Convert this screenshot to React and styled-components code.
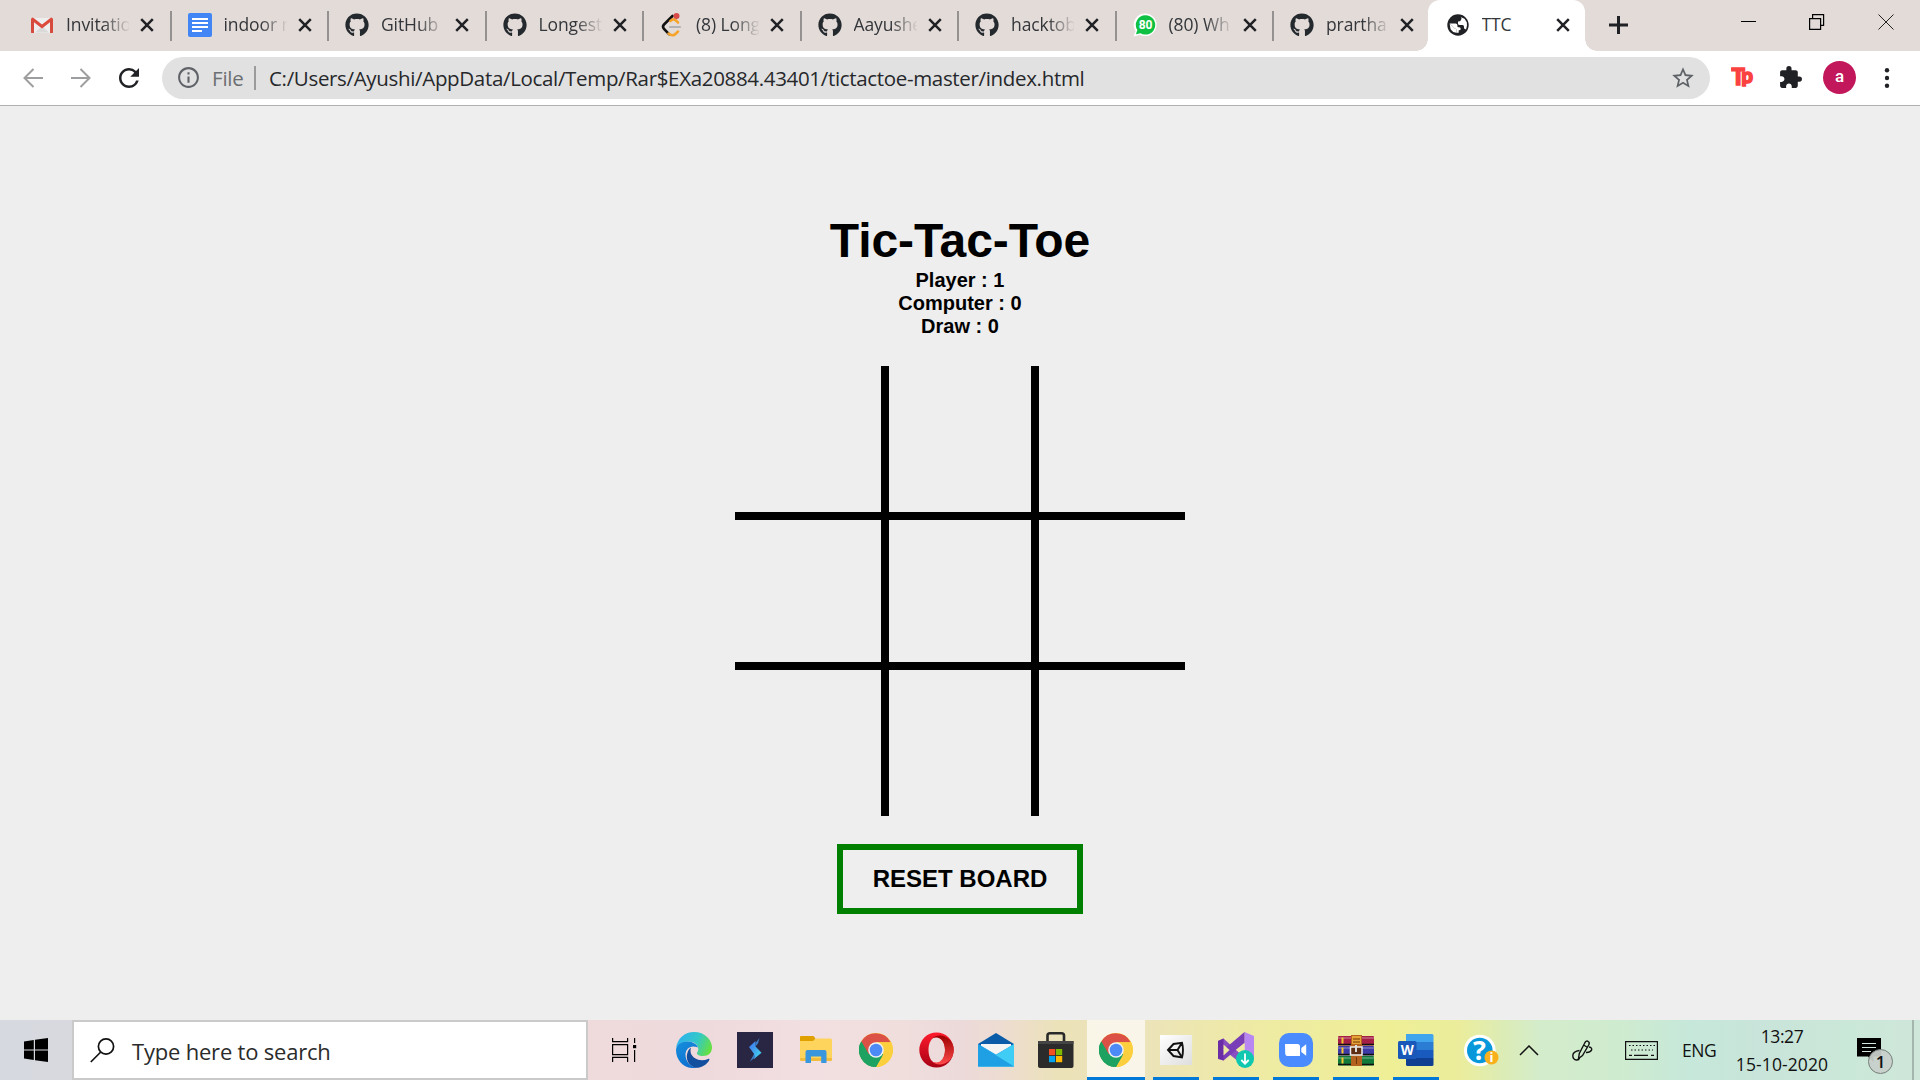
import React from "react";
import styled, { createGlobalStyle, css } from "styled-components";
import { FaGithub } from "react-icons/fa";
import { MdExtension, MdInfoOutline, MdRefresh, MdStarBorder } from "react-icons/md";

const GlobalStyle = createGlobalStyle`
  * { box-sizing: border-box; }
  html, body { margin: 0; padding: 0; }
  body { width: 1920px; height: 1080px; overflow: hidden; }
  svg { display: block; flex: none; }
`;

const UI = `"Open Sans", "Noto Sans", sans-serif`;
const PAGE = `"Liberation Sans", Arial, sans-serif`;

const Screen = styled.div`
  display: flex;
  flex-direction: column;
  width: 1920px;
  height: 1080px;
  background: #eee;
  font-family: ${UI};
`;

/* ---------- tab strip ---------- */

const TabStrip = styled.div`
  display: flex;
  height: 51px;
  flex: none;
  padding-left: 13px;
  background: #e3dbd8;
`;

const Tab = styled.div`
  display: flex;
  align-items: center;
  position: relative;
  width: 157.5px;
  height: 51px;
  flex: none;
  padding: 0 0 1px 17px;
  ${(p) =>
    p.$line &&
    css`
      &::after {
        content: "";
        position: absolute;
        right: -1px;
        top: 11px;
        width: 2px;
        height: 30px;
        background: #959190;
      }
    `}
  ${(p) =>
    p.$active &&
    css`
      margin-left: -3px;
      padding-left: 18px;
      background: #fff;
      border-radius: 12px 12px 0 0;
      &::before,
      &::after {
        content: "";
        position: absolute;
        bottom: 0;
        width: 12px;
        height: 12px;
      }
      &::before {
        left: -12px;
        background: radial-gradient(circle at 0 0, transparent 11.5px, #fff 12px);
      }
      &::after {
        right: -12px;
        background: radial-gradient(circle at 100% 0, transparent 11.5px, #fff 12px);
      }
    `}
`;

const TabIcon = styled.span`
  display: flex;
  width: 24px;
  height: 24px;
  flex: none;
  align-items: center;
  justify-content: center;
  color: #24292e;
`;

const TabTitle = styled.span`
  width: 63px;
  margin: 0 0 2px 12px;
  overflow: hidden;
  white-space: nowrap;
  font-size: 17.5px;
  line-height: 26px;
  letter-spacing: -0.1px;
  color: #33363a;
  ${(p) =>
    p.$fade &&
    css`
      mask-image: linear-gradient(to right, #000 58%, transparent 102%);
    `}
`;

const CloseSlot = styled.span`
  display: flex;
  width: 14px;
  margin-left: 11px;
  justify-content: center;
`;

const NewTab = styled.span`
  display: flex;
  align-items: center;
  margin-left: 24px;
  padding-bottom: 1px;
`;

const WindowControls = styled.div`
  display: flex;
  height: 43px;
  margin-left: auto;
  align-items: center;
`;

const WindowButton = styled.span`
  display: flex;
  width: 68.5px;
  justify-content: center;
`;

/* ---------- toolbar ---------- */

const Toolbar = styled.div`
  display: flex;
  align-items: center;
  height: 55px;
  flex: none;
  padding: 0 0 1px 9px;
  background: #fff;
  border-bottom: 1px solid #b0b0b0;
`;

const NavButton = styled.span`
  display: flex;
  width: 48px;
  justify-content: center;
  color: ${(p) => (p.$off ? "#9d9ea0" : "#202124")};
`;

const Omnibox = styled.div`
  display: flex;
  align-items: center;
  width: 1548px;
  height: 42px;
  margin-left: 9px;
  padding: 0 14px 0 14px;
  border-radius: 21px;
  background: #e1e1e1;
  color: #5f6368;
  font-size: 20.5px;
  line-height: 30px;
  white-space: nowrap;
`;

const Scheme = styled.span`
  width: 42px;
  margin-left: 11px;
  color: #6c6f72;
  letter-spacing: -0.2px;
`;

const Divider = styled.span`
  width: 2px;
  height: 24px;
  background: #9b9b9b;
`;

const Url = styled.span`
  flex: 1;
  margin-left: 13px;
  color: #26282b;
  letter-spacing: -0.33px;
`;

const Extensions = styled.div`
  display: flex;
  flex: 1;
  align-items: center;
  padding-left: 21px;
`;

const ExtensionIcon = styled.span`
  display: flex;
  margin-left: 23px;
`;

const Avatar = styled.span`
  width: 33px;
  height: 33px;
  margin-left: 20px;
  border-radius: 50%;
  background: #c2185b;
  color: #fff;
  font: 500 17px/31px Roboto, sans-serif;
  text-align: center;
`;

const MenuDots = styled.span`
  display: flex;
  margin-left: 28px;
`;

/* ---------- game ---------- */

const Game = styled.main`
  display: flex;
  flex: 1;
  flex-direction: column;
  align-items: center;
  padding-top: 107px;
  font-family: ${PAGE};
  font-weight: 700;
  color: #000;
`;

const Title = styled.h1`
  margin: 0 0 1px;
  font-size: 48px;
  line-height: 55px;
  letter-spacing: -0.1px;
`;

const Score = styled.div`
  font-size: 20px;
  line-height: 23px;
`;

const Board = styled.div`
  display: grid;
  grid-template-columns: repeat(3, 150px);
  grid-template-rows: repeat(3, 150px);
  margin: 28px 0;
`;

const Cell = styled.div`
  border: 0 solid #000;
  border-left-width: ${(p) => (p.$col > 0 ? 4 : 0)}px;
  border-right-width: ${(p) => (p.$col < 2 ? 4 : 0)}px;
  border-top-width: ${(p) => (p.$row > 0 ? 4 : 0)}px;
  border-bottom-width: ${(p) => (p.$row < 2 ? 4 : 0)}px;
`;

const ResetButton = styled.button`
  width: 246px;
  height: 70px;
  padding: 0;
  border: 6px solid green;
  background: transparent;
  font: 700 24px/28px ${PAGE};
  color: #000;
`;

/* ---------- taskbar ---------- */

const Taskbar = styled.div`
  display: flex;
  height: 60px;
  flex: none;
  background: linear-gradient(
    to right,
    #d6d9e0 0,
    #d8d9df 72px,
    #efdadc 588px,
    #eed9dc 700px,
    #f2dfe1 810px,
    #f0dedd 900px,
    #ecd9da 960px,
    #eddcd2 1000px,
    #ebe2b8 1060px,
    #ece3bb 1140px,
    #eeeaa6 1240px,
    #efef96 1390px,
    #ebed9c 1460px,
    #ddecb4 1500px,
    #d3eccb 1540px,
    #cfebcf 1620px,
    #c6e8da 1690px,
    #c9e4da 1760px,
    #cae8d8 1850px,
    #cfe6da 1920px
  );
`;

const StartButton = styled.span`
  display: flex;
  width: 72px;
  align-items: center;
  justify-content: center;
`;

const SearchBox = styled.div`
  display: flex;
  width: 516px;
  align-items: center;
  padding-left: 16px;
  border: 2px solid #cacaca;
  background: #fff;
  color: #2b2b2b;
  font-size: 22px;
  line-height: 32px;
`;

const SearchText = styled.span`
  margin: 1px 0 0 17px;
  letter-spacing: -0.2px;
`;

const TaskView = styled.span`
  display: flex;
  width: 78px;
  align-items: center;
  padding-left: 24px;
`;

const TaskButton = styled.span`
  display: flex;
  position: relative;
  width: 58px;
  margin: 0 1px;
  padding-right: ${(p) => p.$shift || 0}px;
  align-items: center;
  justify-content: center;
  background: ${(p) => (p.$state === "active" ? "rgba(255,255,255,.68)" : "none")};
  ${(p) =>
    p.$state &&
    css`
      &::after {
        content: "";
        position: absolute;
        bottom: 0;
        left: ${p.$state === "active" ? 0 : 6}px;
        right: ${p.$state === "active" ? 0 : 6}px;
        height: 3px;
        background: #0078d7;
      }
    `}
`;

const Tray = styled.div`
  display: flex;
  flex: 1;
  align-items: center;
  padding-left: 18px;
  color: #111;
  font-size: 17.5px;
  line-height: 26px;
`;

const TrayItem = styled.span`
  display: flex;
  margin-left: ${(p) => p.$gap || 0}px;
  padding-top: ${(p) => p.$drop || 0}px;
`;

const Language = styled.span`
  width: 35px;
  margin-left: 24px;
  letter-spacing: -0.4px;
  white-space: nowrap;
`;

const Clock = styled.div`
  display: flex;
  width: 100px;
  height: 60px;
  margin-left: 15px;
  flex-direction: column;
  align-items: center;
  justify-content: center;
  gap: 2px;
  white-space: nowrap;
`;

const ClockLine = styled.span`
  letter-spacing: ${(p) => p.$spacing}px;
`;

const DesktopEdge = styled.span`
  width: 8px;
  height: 60px;
  margin-left: auto;
  border-left: 2px solid #a3b5ad;
`;

/* ---------- drawings ---------- */

const CloseX = () => (
  <svg width="14" height="14" viewBox="0 0 14 14" stroke="#202124" strokeWidth="2.5">
    <path d="M1.2 1.2 12.8 12.8M12.8 1.2 1.2 12.8" />
  </svg>
);

const Gmail = () => (
  <svg width="24" height="24" viewBox="0 0 24 24">
    <path d="M2 5h20v15H2z" fill="#eee" />
    <path d="M5 19.5 12 13l7 6.5z" fill="#dadada" />
    <path d="M1 6.5Q1 4.500 3 4.500V20H1.800Q1 20 1 19z" fill="#d54b3d" />
    <path d="M23 6.500Q23 4.500 21 4.500V20h1.200q.8 0 .8-1z" fill="#d54b3d" />
    <path d="M2.400 6 12 13.500 21.600 6" fill="none" stroke="#dc4a3e" strokeWidth="3" />
    <path d="M4 8v12H1.500V6zM20 8v12h2.500V6z" fill="#d54b3d" />
  </svg>
);

const Docs = () => (
  <svg width="24" height="24" viewBox="0 0 24 24">
    <rect width="24" height="24" rx="2" fill="#4285f4" />
    <path d="M4 6h16M4 10h16M4 14h16M4 18h10" stroke="#fff" strokeWidth="2.200" />
  </svg>
);

const LeetCode = () => (
  <svg width="24" height="24" viewBox="0 0 24 24" fill="none" strokeLinecap="round">
    <path d="M12.500 3 4 11.500q-2 2 0 4.500l5 5.200" stroke="#111" strokeWidth="2.600" />
    <path d="M10.500 8q3-3 5.500-.5l2 2M8.500 20.500q4 3.500 7.500 0l2-2" stroke="#f7a42b" strokeWidth="2.500" />
    <path d="M10 14h10" stroke="#b3b3b3" strokeWidth="2.200" />
    <circle cx="16.500" cy="3" r="3" fill="#d84b48" />
  </svg>
);

const WhatsApp = () => (
  <svg width="24" height="24" viewBox="0 0 24 24">
    <path d="M12.500.5a11.300 11.300 0 1 1-5.500 21.300L.5 23.500 2.600 18A11.300 11.300 0 0 1 12.500.5z" fill="#fff" />
    <path d="M12.500 2.200a9.700 9.700 0 1 1-5 18l-4.600 1.100 1.500-4.200a9.700 9.700 0 0 1 8.100-14.900z" fill="#0fc143" />
    <text x="12.600" y="16.300" textAnchor="middle" fontFamily="Roboto" fontWeight="700" fontSize="12" fill="#fff">80</text>
  </svg>
);

const Globe = () => (
  <svg width="22" height="22" viewBox="0 0 22 22">
    <circle cx="11" cy="11" r="10.700" fill="#202124" />
    <path d="M12.500 2.500Q15.500 3.500 14 6q-.5 1.500-3 1.500v2.200q0 1.300 1.800 1.300h2.700q1.500 0 1.500 1.800v1.700q1.700.2 2 1.200l1-4.200-.2-3.200-2.300-3.500zM2.600 9.500l5 4.800q.7.700 1.700.7v3.800q-4-.6-5.700-3.600z" fill="#fff" />
    <path d="M2.600 9.500h6q1.800 0 1.800 1.800v.9q0 1 1 1h.8q1.500 0 1.500 1.500t-1.500 1.500h-.5v2.600H9.300V15q-1 0-1.700-.7z" fill="#fff" />
  </svg>
);

const Arrow = ({ flip }) => (
  <svg width="20" height="20" viewBox="0 0 20 20" fill="none" stroke="currentColor" strokeWidth="2">
    <path d={flip ? "M0 10h18M9.500 1l9 9-9 9" : "M20 10H2M10.500 1 1.500 10l9 9"} />
  </svg>
);

const TypingLogo = () => (
  <svg width="24" height="26" viewBox="0 0 24 26" fill="#fa4341" stroke="#fa4341" strokeWidth="1.600" fontFamily="Lato" fontWeight="900">
    <text x=".6" y="19.500" fontSize="22">T</text>
    <text x="10.400" y="18" fontSize="20">p</text>
  </svg>
);

const WindowsLogo = () => (
  <svg width="24" height="24" viewBox="0 0 24 24">
    <path d="M0 3.400 9.800 2v9.400H0zM11 1.800 24 0v11.400H11zM0 12.500h9.800V22L0 20.600zM11 12.500h13V24l-13-1.800z" />
  </svg>
);

const SearchGlyph = () => (
  <svg width="25" height="25" viewBox="0 0 25 25" fill="none" stroke="#111" strokeWidth="1.700">
    <circle cx="16" cy="8.500" r="7.600" />
    <path d="M10.800 14 .8 24" />
  </svg>
);

const TaskViewGlyph = () => (
  <svg width="25" height="24" viewBox="0 0 25 24" fill="none" stroke="#000" strokeWidth="1.200">
    <path d="M.6 0v3.600h15V0M.6 24v-4.600h15V24M.6 6.600h15v10H.6zM22.600 0v5M22.600 12v12" />
    <path d="M21 7h3.200v3.200H21z" fill="#000" stroke="none" />
  </svg>
);

const Edge = () => (
  <svg width="36" height="36" viewBox="0 0 36 36">
    <defs>
      <linearGradient id="edgeTop" x1="0" y1="0.300" x2="1" y2="0.600">
        <stop offset="0" stopColor="#2fb0ef" />
        <stop offset=".55" stopColor="#33c8c9" />
        <stop offset="1" stopColor="#66e03f" />
      </linearGradient>
      <linearGradient id="edgeLeft" x1="0" y1="0" x2="0.600" y2="1">
        <stop offset="0" stopColor="#1590dc" />
        <stop offset="1" stopColor="#0f6fd0" />
      </linearGradient>
    </defs>
    <path d="M0 17C1 6 9 0 18 0c11 0 18 8 18 15.500 0 5-3.500 8.500-9 8.500-4 0-6.500-1.500-6-3 .3-1 1.300-1.700 1.300-4 0-4-4-7.500-10-7.500C6 9.500 1 12.500 0 17z" fill="url(#edgeTop)" />
    <path d="M0 18C.5 12 6 9.300 12 9.500c5 .2 9 3 10 6-8-3.500-12.500 2-12.500 7C9.500 30 15 35 21 35.700 9 38 0 29 0 18z" fill="url(#edgeLeft)" />
    <path d="M15 15.500C9 20 8.500 33 20 35.800c6 0 11-3.300 13.300-7.800.5-1-.4-1.400-1.200-1C23 31 14.500 25 14.500 19q0-2 .5-3.500z" fill="#124f9e" />
  </svg>
);

const SIcon = () => (
  <svg width="36" height="36" viewBox="0 0 36 36">
    <defs>
      <linearGradient id="sGrad" x1="0" y1="0" x2="1" y2="1">
        <stop offset="0" stopColor="#3e6df0" />
        <stop offset="1" stopColor="#43e0ee" />
      </linearGradient>
    </defs>
    <path d="M0 0h36v36H0z" fill="#292643" />
    <path d="m12 15 6.500-6v5.500l6 6.200L17 27v-5.300z" fill="url(#sGrad)" />
    <path d="m18.500 11 4-5-1.500 5.500-2.500 3zM17 22l-4 7.500 5.500-4.500z" fill="#3b7fc9" />
  </svg>
);

const Explorer = () => (
  <svg width="32" height="28" viewBox="0 0 32 28">
    <path d="M1 0h12.500l2 2.500L13 6H0V1q0-1 1-1z" fill="#dfa000" />
    <path d="M0 5h13l3-2.500h14.500Q32 2.500 32 4v19.500q0 1.500-1.500 1.500h-29Q0 25 0 23.500z" fill="#ffd45c" />
    <path d="M0 22h32v1.500q0 1.500-1.500 1.500h-29Q0 25 0 23.500z" fill="#f2bd3c" />
    <path d="M5.500 27V16q0-2 2-2h17q2 0 2 2v11h-5.300v-6.500H11V27z" fill="#3a96dd" />
  </svg>
);

const Chrome = () => (
  <svg width="34" height="34" viewBox="0 0 48 48">
    <circle cx="24" cy="24" r="24" fill="#fccf3f" />
    <path d="M24 24 3.200 12A24 24 0 0 0 24 48l10.400-18z" fill="#1da261" />
    <path d="M24 24 13.600 30 3.200 12a24 24 0 0 1 41.600 0.900H24z" fill="#db5145" />
    <path d="M24 13h21.300A24 24 0 0 1 24 48l10-17.500z" fill="#fccf3f" />
    <path d="M3.200 12 13.600 30A12 12 0 0 0 34.400 30L24 48A24 24 0 0 1 3.200 12z" fill="#1da261" />
    <circle cx="24" cy="24" r="11" fill="#f1f1f1" />
    <circle cx="24" cy="24" r="8.900" fill="#4c8bf5" />
  </svg>
);

const Opera = () => (
  <svg width="35" height="36" viewBox="0 0 35 36">
    <defs>
      <linearGradient id="operaLeft" x1="0" y1="0" x2="0" y2="1">
        <stop offset="0" stopColor="#ff1b2d" />
        <stop offset="1" stopColor="#a70014" />
      </linearGradient>
      <linearGradient id="operaRight" x1="0" y1="0" x2="0" y2="1">
        <stop offset="0" stopColor="#9c0000" />
        <stop offset="1" stopColor="#ff4b4b" />
      </linearGradient>
    </defs>
    <path fillRule="evenodd" d="M17.500.5a17.200 17.500 0 1 1 0 35 17.200 17.500 0 1 1 0-35zm0 4.500c-5 0-8 6-8 13s3 13 8 13 8.500-6 8.500-13-3.500-13-8.500-13z" fill="url(#operaLeft)" />
    <path d="M13 6.500C20-.5 35 5 34.700 18 34.700 31 20 36.500 13 29.500c7 3.500 13-2 13-11.500S20 3 13 6.500z" fill="url(#operaRight)" />
  </svg>
);

const Mail = () => (
  <svg width="36" height="34" viewBox="0 0 36 34">
    <path d="M0 11 18 0l18 11v6H0z" fill="#0a5ba8" />
    <path d="M3 11h30v9L18 26 3 20z" fill="#f4f4f4" />
    <path d="M0 11v22.500h36V11L18 21.500z" fill="#2cb3ee" />
    <path d="M0 33.500 36 11v22.500z" fill="#40cdf5" />
    <path d="M0 33.500V11l36 22.500z" fill="#1f9fe4" />
  </svg>
);

const Store = () => (
  <svg width="36" height="36" viewBox="0 0 36 36">
    <path d="M9.500 12V3.500Q9.500 1.300 12 1.300h11.500q2.500 0 2.500 2.200V12" fill="none" stroke="#292929" strokeWidth="2.600" />
    <path d="M0 9h35.500v25q0 2-2 2H2q-2 0-2-2z" fill="#2b2b2b" />
    <path d="M0 9h35.500v3H0z" fill="#444" />
    <path d="M11 17h6.200v6.200H11z" fill="#f25022" />
    <path d="M18 17h6.200v6.200H18z" fill="#7fba00" />
    <path d="M11 24h6.200v6.200H11z" fill="#00a4ef" />
    <path d="M18 24h6.200v6.200H18z" fill="#ffb900" />
  </svg>
);

const Unity = () => (
  <svg width="32" height="30" viewBox="0 0 32 30">
    <defs>
      <linearGradient id="unityBg" x1="0" y1="0" x2="1" y2="1">
        <stop offset="0" stopColor="#fff" />
        <stop offset="1" stopColor="#dedede" />
      </linearGradient>
    </defs>
    <path d="M0 0h32v30H0z" fill="url(#unityBg)" />
    <path d="M8 15 13.500 9l8.500-1.300q2 7.300 0 14.800L13.500 21zM8 15h9.500M17.500 15 22 7.700M17.500 15l4.500 7.500" fill="none" stroke="#111" strokeWidth="1.900" />
  </svg>
);

const VisualStudio = () => (
  <svg width="36" height="36" viewBox="0 0 36 36">
    <path d="M26.500 0 36 4v23l-9.500 5z" fill="#b987f2" />
    <path fillRule="evenodd" d="M0 9 5.500 6.500 27 26v6L21 30 0 13z" fill="#8a4fc0" />
    <path d="M0 22.500 26.500 0v11L5.500 28.500 0 27z" fill="#7a3db8" />
    <path d="M0 9 5.500 6.500V28.500L0 26z" fill="#6a2da5" />
    <path d="M5.500 12.500v11l6-5.500z" fill="#eeea9f" />
    <path d="m26.500 11-8.500 6.800 8.500 6.700z" fill="#eeea9f" />
    <circle cx="27" cy="27" r="9" fill="#10c8b0" />
    <path d="M27 21.500v10M23.300 28l3.700 3.700 3.700-3.700" fill="none" stroke="#fff" strokeWidth="1.800" />
  </svg>
);

const Zoom = () => (
  <svg width="34" height="34" viewBox="0 0 34 34">
    <rect width="34" height="34" rx="10" fill="#4a8cff" />
    <path d="M6 11h12.500q2.500 0 2.500 2.500V23H9q-2.800 0-2.800-2.800zM22.300 15l4.900-3.700v11.400L22.300 19z" fill="#fff" />
  </svg>
);

const WinRar = () => (
  <svg width="36" height="31" viewBox="0 0 36 31">
    <rect y="1" width="36" height="9.600" rx="1" fill="#a51e45" />
    <rect y="11" width="36" height="9.600" rx="1" fill="#3d3aa6" />
    <rect y="21" width="36" height="9.600" rx="1" fill="#11793a" />
    <path d="M0 3h36M0 13h36M0 23h36" stroke="#fff" strokeOpacity=".3" strokeWidth="1.500" />
    <path d="M0 9.500h36M0 19.500h36M0 29.500h36" stroke="#111" strokeWidth="1.500" />
    <path d="M4.500 2.500v6M4.500 12.500v6M4.500 22.500v6" stroke="#f4c431" strokeWidth="2" />
    <path d="M13 0h11v31H13z" fill="#b3631f" />
    <path d="M14 1h9v8h-9z" fill="#e8a336" />
    <path d="M15 4h7M15 7h7M18.500 22v7" stroke="#6e3609" />
    <rect x="12.500" y="12" width="11.500" height="8" fill="#5e2d12" stroke="#eee" strokeWidth="1.500" />
    <path d="M18 10v7" stroke="#ddd" strokeWidth="2" />
  </svg>
);

const Word = () => (
  <svg width="36" height="32" viewBox="0 0 36 32">
    <path d="M8 0h26q1.500 0 1.500 1.500V8H8z" fill="#41a5ee" />
    <path d="M8 8h27.500v8H8z" fill="#2b7cd3" />
    <path d="M8 16h27.500v8H8z" fill="#185abd" />
    <path d="M8 24h27.500v6.500Q35.500 32 34 32H9.500Q8 32 8 30.500z" fill="#103f91" />
    <rect y="7" width="18.500" height="18" rx="1.500" fill="#1957b8" />
    <text x="9.200" y="21" textAnchor="middle" fontFamily="Open Sans" fontWeight="700" fontSize="13.500" fill="#fff">W</text>
  </svg>
);

const Help = () => (
  <svg width="36" height="34" viewBox="0 0 36 34">
    <circle cx="15.800" cy="17.500" r="15.800" fill="#fff" />
    <circle cx="15.800" cy="17.500" r="12.800" fill="#0798dc" />
    <text x="15.500" y="27" textAnchor="middle" fontFamily="Open Sans" fontWeight="700" fontSize="27" fill="#fff">?</text>
    <circle cx="27.500" cy="24.500" r="7" fill="#f8b01c" />
    <text x="27.500" y="29.300" textAnchor="middle" fontFamily="Open Sans" fontWeight="700" fontSize="13" fill="#fff">i</text>
  </svg>
);

const Chevron = () => (
  <svg width="20" height="11" viewBox="0 0 20 11" fill="none" stroke="#111" strokeWidth="1.500">
    <path d="m1 10 9-9 9 9" />
  </svg>
);

const Pen = () => (
  <svg width="21" height="21" viewBox="0 0 21 21" fill="none" stroke="#111" strokeWidth="1.400">
    <path d="m6.500 18.500.8-5L13 2.500q1.500-2.200 3.200-1 1.800 1 .5 3.500L10.500 15.500zM11.500 5l3.500 2" />
    <path d="M7.500 10.500Q1 11.500.8 15.500.8 19.500 4.500 20q2.500.2 3-2M17 7q3.500.7 2.500 3.200-1.500 2.500-5.500 2.300" />
  </svg>
);

const Keyboard = () => (
  <svg width="33" height="19" viewBox="0 0 33 19" fill="none" stroke="#111" strokeWidth="1.200">
    <path d="M.6.6h31.800v17.800H.6z" />
    <path d="M4 4.500h26M6 9h22" strokeDasharray="1.500 2" />
    <path d="M4 14.300h3M9 14.300h14M26 14.300h3" />
  </svg>
);

const Notification = () => (
  <svg width="37" height="37" viewBox="0 0 37 37">
    <path d="M0 0h24v18.500h-7.500V24L11 18.500H0z" />
    <path d="M5 5.500h14M5 9.500h14M5 13.500h9" stroke="#d5e8dd" strokeWidth="1.200" />
    <circle cx="23.500" cy="23.500" r="12" fill="#c8cfcb" fillOpacity=".94" stroke="#777f7b" />
    <text x="23.500" y="30" textAnchor="middle" fontFamily="Open Sans" fontWeight="600" fontSize="17" fill="#111">1</text>
  </svg>
);

/* ---------- data ---------- */

const github = <FaGithub size={24} />;

const tabs = [
  { icon: <Gmail />, title: "Invitatio" },
  { icon: <Docs />, title: "indoor r" },
  { icon: github, title: "GitHub" },
  { icon: github, title: "Longest" },
  { icon: <LeetCode />, title: "(8) Long" },
  { icon: github, title: "Aayushe" },
  { icon: github, title: "hacktob" },
  { icon: <WhatsApp />, title: "(80) Wh" },
  { icon: github, title: "prartha" },
];

const apps = [
  { icon: <Edge />, shift: 4 },
  { icon: <SIcon />, shift: 2 },
  { icon: <Explorer /> },
  { icon: <Chrome /> },
  { icon: <Opera /> },
  { icon: <Mail /> },
  { icon: <Store /> },
  { icon: <Chrome />, state: "active" },
  { icon: <Unity />, state: "open" },
  { icon: <VisualStudio />, state: "open" },
  { icon: <Zoom />, state: "open" },
  { icon: <WinRar />, state: "open" },
  { icon: <Word />, state: "open" },
];

const scores = [
  ["Player", 1],
  ["Computer", 0],
  ["Draw", 0],
];

export default function App() {
  return (
    <Screen>
      <GlobalStyle />
      <TabStrip>
        {tabs.map((tab, i) => (
          <Tab key={i} $line={i < tabs.length - 1}>
            <TabIcon>{tab.icon}</TabIcon>
            <TabTitle $fade>{tab.title}</TabTitle>
            <CloseSlot><CloseX /></CloseSlot>
          </Tab>
        ))}
        <Tab $active>
          <TabIcon><Globe /></TabIcon>
          <TabTitle>TTC</TabTitle>
          <CloseSlot><CloseX /></CloseSlot>
        </Tab>
        <NewTab>
          <svg width="19" height="18" viewBox="0 0 19 18" stroke="#202124" strokeWidth="3">
            <path d="M9.500 0v18M0 9h19" />
          </svg>
        </NewTab>
        <WindowControls>
          <WindowButton>
            <svg width="15" height="16" viewBox="0 0 15 16" stroke="#000"><path d="M0 7.500h15" /></svg>
          </WindowButton>
          <WindowButton>
            <svg width="16" height="16" viewBox="0 0 16 16" fill="none" stroke="#000" strokeWidth="1.200">
              <path d="M.6 4.600h11v10.800H.6zM3.600 4.600v-4h11v10.800h-3" />
            </svg>
          </WindowButton>
          <WindowButton>
            <svg width="16" height="16" viewBox="0 0 16 16" stroke="#222"><path d="m.5.5 15 15m0-15-15 15" /></svg>
          </WindowButton>
        </WindowControls>
      </TabStrip>

      <Toolbar>
        <NavButton $off><Arrow /></NavButton>
        <NavButton $off><Arrow flip /></NavButton>
        <NavButton><MdRefresh size={30} /></NavButton>
        <Omnibox>
          <MdInfoOutline size={25} />
          <Scheme>File</Scheme>
          <Divider />
          <Url>C:/Users/Ayushi/AppData/Local/Temp/Rar$EXa20884.43401/tictactoe-master/index.html</Url>
          <MdStarBorder size={26} />
        </Omnibox>
        <Extensions>
          <TypingLogo />
          <ExtensionIcon><MdExtension size={25} color="#202124" /></ExtensionIcon>
          <Avatar>a</Avatar>
          <MenuDots>
            <svg width="6" height="20" viewBox="0 0 6 20" fill="#202124">
              <circle cx="3" cy="2.300" r="2.200" />
              <circle cx="3" cy="10" r="2.200" />
              <circle cx="3" cy="17.700" r="2.200" />
            </svg>
          </MenuDots>
        </Extensions>
      </Toolbar>

      <Game>
        <Title>Tic-Tac-Toe</Title>
        {scores.map(([name, value]) => (
          <Score key={name}>{`${name} : ${value}`}</Score>
        ))}
        <Board>
          {Array.from({ length: 9 }, (_, i) => (
            <Cell key={i} $row={Math.floor(i / 3)} $col={i % 3} />
          ))}
        </Board>
        <ResetButton>RESET BOARD</ResetButton>
      </Game>

      <Taskbar>
        <StartButton><WindowsLogo /></StartButton>
        <SearchBox>
          <SearchGlyph />
          <SearchText>Type here to search</SearchText>
        </SearchBox>
        <TaskView><TaskViewGlyph /></TaskView>
        {apps.map((app, i) => (
          <TaskButton key={i} $state={app.state} $shift={app.shift}>{app.icon}</TaskButton>
        ))}
        <Tray>
          <Help />
          <TrayItem $gap={19}><Chevron /></TrayItem>
          <TrayItem $gap={33}><Pen /></TrayItem>
          <TrayItem $gap={32}><Keyboard /></TrayItem>
          <Language>ENG</Language>
          <Clock>
            <ClockLine $spacing={-0.4}>13:27</ClockLine>
            <ClockLine $spacing={0.1}>15-10-2020</ClockLine>
          </Clock>
          <TrayItem $gap={25} $drop={13}><Notification /></TrayItem>
          <DesktopEdge />
        </Tray>
      </Taskbar>
    </Screen>
  );
}
